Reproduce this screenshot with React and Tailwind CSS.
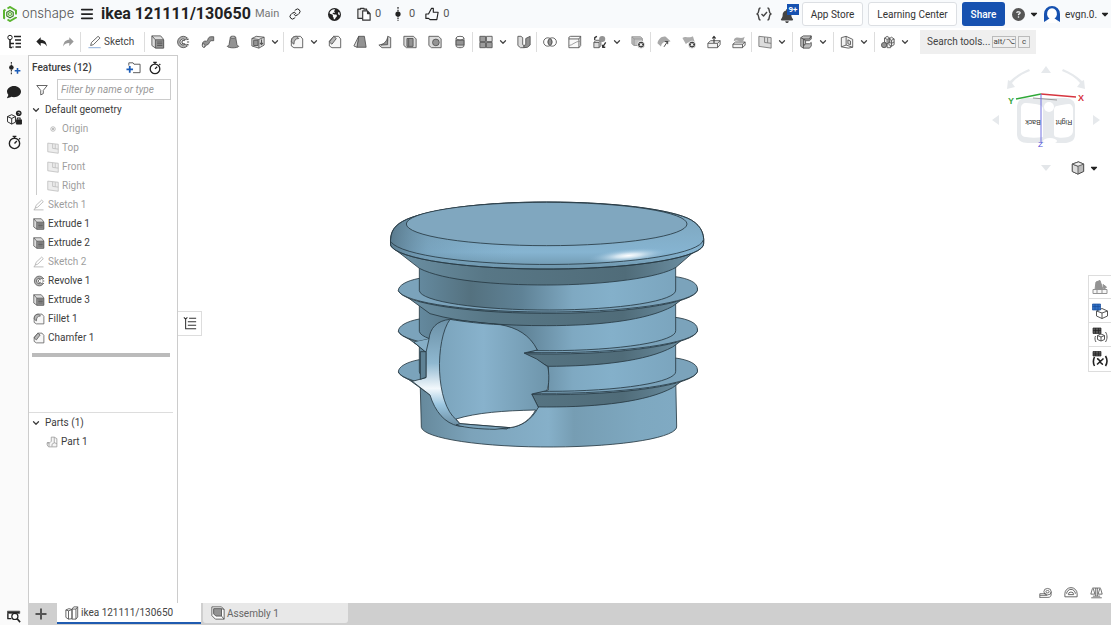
import clsx from 'clsx';
import {
  FaBars,
  FaBell,
  FaCaretDown,
  FaCircleQuestion,
  FaComment,
  FaEarthAmericas,
} from 'react-icons/fa6';
import { LuChevronDown, LuLink } from 'react-icons/lu';

const LINE = '#555';
const MID = '#939393';
const PALE = '#dcdcdc';

// 16 x 16 glyphs, shared by the toolbar, the feature list and the side rails
const GLYPHS = {
  undo: <path d="M6.5 2.5v3c4 .1 6.6 2.3 7 7.5-1.5-2.700-3.5-3.800-7-3.800v3.300L1.500 7.500z" fill="#222" stroke="none" />,
  redo: <path d="M9.5 2.5v3c-4 .1-6.6 2.3-7 7.5 1.5-2.700 3.5-3.800 7-3.800v3.300l5-5z" fill="#999" stroke="none" />,
  sketch: (
    <>
      <path d="M3 12l1-3.5L11.5 1.5l2.2 2L6.2 11z" />
      <path d="M.5 14.500h14" stroke="#7fa3d6" />
    </>
  ),
  pencil: (
    <>
      <path d="M3 12l1-3.5L11.5 1.5l2.2 2L6.2 11zM3 12l-1.500 2.500" />
      <path d="M1 14.500h13" />
    </>
  ),
  extrude: (
    <>
      <path d="M1 1h10l3 3.500v10H4.500L1 12z" fill={PALE} />
      <path d="M5 5.500h9.500v9.500H5z" fill={MID} />
      <path d="M1 1l4 4.500M7 8h6M7 10h6M7 12h6" />
    </>
  ),
  revolve: (
    <>
      <path d="M13 3.500A6.500 6.500 0 1 0 13 12.500L10.500 10.500A3.500 3.500 0 1 1 10.500 5.500z" fill="#b0b0b0" />
      <path d="M12 5.500l2.500-1M12.500 8H15M12 10.500l2.500 1M10 6.500a2 2 0 1 0 0 3.200" strokeWidth="1.300" />
    </>
  ),
  sweep: (
    <>
      <path d="M1.500 11c0-3 2-4.500 4.500-4 2.500.5 1-4.500 5-5h3.500v4.500h-3C9 7 10 11 6.500 11.500 5 11.500 5 14 4 14c-1.500 0-2.500-1.500-2.500-3z" fill={MID} />
      <ellipse cx="3" cy="12" rx="1.500" ry="2" fill={PALE} />
    </>
  ),
  loft: (
    <>
      <path d="M5 2.500h6l1.500 8.500 2 2c-2 2.200-11 2.200-13 0l2-2z" fill={MID} />
      <ellipse cx="8" cy="2.500" rx="3" ry="1.200" fill={PALE} />
    </>
  ),
  thicken: (
    <>
      <path d="M1 4l8 1v10l-8-2.500zM9 5l6-2.500v9L9 15M1 4l5-2.500 9 1" fill={PALE} />
      <path d="M3 6h5v6H3z" fill={MID} />
      <path d="M12 5v6M10.300 9l1.700 2 1.700-2" strokeWidth="1.300" />
    </>
  ),
  fillet: (
    <>
      <path d="M1.500 12.500V7.500c0-4.500 2.500-6 6-6H12L14.500 4.500v10H4.500z" fill="#f7f7f7" />
      <path d="M1.500 8c0-4.500 2.500-6.500 6-6.500l2.500 2.500C6 4 4.500 6.500 4.500 10.500z" fill="#b8b8b8" />
    </>
  ),
  chamfer: (
    <>
      <path d="M1.500 12.500V7l5-5.500H12L14.500 4.500v10H4.500z" fill="#f7f7f7" />
      <path d="M1.500 8l5-6.500L9.500 4 4.500 10.500z" fill="#b8b8b8" />
    </>
  ),
  draft: (
    <>
      <path d="M6.500 1.500h6.500l2 12.500H4.500z" fill={MID} />
      <path d="M6.500 1.500L1 12.500 4.500 14z" fill={PALE} />
    </>
  ),
  rib: (
    <>
      <path d="M11 1.500l3.500 1.500v11.500h-10L1 11.500l6-1.500 4-3z" fill={PALE} />
      <path d="M11 3v8L3.500 11.500C7 10 10 7 11 3z" fill={MID} />
    </>
  ),
  shell: (
    <>
      <path d="M1 1.500h11L15 4.500v10H4L1 12z" fill={PALE} />
      <path d="M4.500 4h7v9h-7zM6.500 4v9" fill={MID} />
    </>
  ),
  hole: (
    <>
      <path d="M1 1.500h11L15 4.500v10H4L1 12z" fill={PALE} />
      <circle cx="9" cy="8.500" r="3.800" fill={MID} />
    </>
  ),
  thread: (
    <>
      <path d="M3.500 3.500v9c0 2.700 9 2.700 9 0v-9" fill={PALE} />
      <path d="M3.500 6h9v5.500h-9z" fill={MID} />
      <ellipse cx="8" cy="3.500" rx="4.500" ry="2" fill="#fff" />
    </>
  ),
  pattern: (
    <>
      <path d="M1 1.500h6.500v6H1zM1 8.500h6.500v6H1zM8.500 8.500H15v6H8.500z" fill="#9c9c9c" />
      <path d="M8.500 1.500H15v6H8.500z" fill={PALE} />
    </>
  ),
  mirror: (
    <>
      <path d="M1 1.500h3.500L6.500 3v8l1.500 1v2.500H4L1 12z" fill={PALE} />
      <path d="M15 1.500L10 4v7l-2 1v2.500l4-.5 3-2.500z" fill={MID} />
    </>
  ),
  boolean: (
    <>
      <circle cx="5.500" cy="8" r="4.800" />
      <circle cx="10.500" cy="8" r="4.800" />
      <path d="M8 4a4.800 4.800 0 0 1 0 8 4.800 4.800 0 0 1 0-8z" fill={MID} />
    </>
  ),
  split: (
    <>
      <path d="M1 2.500L3 1.500h11.500V12l-2 2.500H1zM1 4.500h11.500v10M12.500 4.500l2-3" fill="#fafafa" />
      <path d="M1 12c4 0 7-5 13.500-5" stroke={MID} />
    </>
  ),
  transform: (
    <>
      <path d="M1 8.500h6v6H1zM1 8.500L3.500 6H9l-2 2.500M9 6v6l-2 2.500" fill={PALE} />
      <circle cx="10.500" cy="4.500" r="3.500" fill={MID} stroke="none" />
      <path d="M2 6V3l2.500-1.500M14.500 8.500L11 14M11 11v3h3" strokeWidth="1.500" stroke="#333" />
    </>
  ),
  deletePart: (
    <>
      <path d="M1 2h10l2 2v8H3.500L1 10zM3.500 4.500H13M3.500 4.500V12M1 2l2.500 2.500" fill="#c2c2c2" stroke={MID} />
      <circle cx="11.500" cy="11" r="4" fill="#3c3c3c" stroke="#fff" />
      <path d="M10 9.500l3 3m0-3l-3 3" stroke="#fff" strokeWidth="1.200" />
    </>
  ),
  moveFace: (
    <>
      <path d="M.5 9.500C1.500 4.500 5.500 1 10 2l5.500 5-4 1.500C8 7 5.500 9 4.500 13z" fill="#a8a8a8" stroke="none" />
      <path d="M8 13.500l4-6M9 7.500h3.200v3" stroke="#333" />
    </>
  ),
  deleteFace: (
    <>
      <path d="M.5 3.500c4-3 7 1 12-2L14.500 8c-4 2-7-1-10 2.500z" fill="#adadad" stroke="none" />
      <circle cx="11.500" cy="11" r="4" fill="#3c3c3c" stroke="#fff" />
      <path d="M10 9.500l3 3m0-3l-3 3" stroke="#fff" strokeWidth="1.200" />
    </>
  ),
  replaceFace: (
    <>
      <path d="M1 9.500l3-3h11V11l-3 3.500H1zM1 9.500h11v5M12 9.500l3-3" fill="#f2f2f2" />
      <path d="M8 9V2M6 4l2-2.500L10 4" stroke="#333" strokeWidth="1.200" />
    </>
  ),
  offset: (
    <>
      <path d="M2.500 4.500c4-4 7 1 12-2.500L13 6.500c-4 2-7-2-11 .5z" fill="#a8a8a8" stroke="none" />
      <path d="M1 10.500L4 8h11v3.500l-3 3H1zM1 10.500h11v4M12 10.500L15 8" fill="#f2f2f2" />
    </>
  ),
  plane: (
    <>
      <path d="M1 1.500l14 1.500v12L1 13z" fill={PALE} stroke="#777" />
      <path d="M7.500 2.300V8.500l7.500 1M11 3v6" stroke="#777" />
    </>
  ),
  frame: (
    <>
      <path d="M2 3l3-2h9v3.500L12 6.500H7.500v3.500H12l2-1.500v4L12 15H5l-3-2z" fill="#bdbdbd" />
      <path d="M5 15V4.500L2 3M5 4.500h7L14 1M5 4.500L7.500 6.500M7.500 10L5 12.500" strokeWidth="1.200" />
    </>
  ),
  sheet: (
    <>
      <path d="M1.500 3L7 1.500v10L1.500 13.500zM7 1.500L14.500 5v9L7 11.500M1.500 13.500l8 1.500 5-1" fill="#f2f2f2" />
      <path d="M9 5.500l3 1.500v4L9 10z" fill={PALE} />
    </>
  ),
  fasten: (
    <>
      <path d="M4 3.500l3-2 3 2V8L7 10 4 8zM9 4.500l3-2 3 2V11l-3 2-3-2zM4 3.500l3 1.500 3-1.500M7 5v5M12 6v7M9 4.500L12 6l3-1.500M9 8l3 1.500L15 8M7 10v4.500h4v-2" fill="#eee" />
      <circle cx="3.500" cy="11.500" r="3" fill={MID} />
    </>
  ),
  origin: (
    <>
      <circle cx="8" cy="8" r="3" />
      <circle cx="8" cy="8" r="1" fill={LINE} />
    </>
  ),
  part: <path d="M7 1.500h4l3.500 2v11H3.500l-2-2.500v-3H5l2-2zM11 1.500V9l3.500 1M11 9l-3 2v3M1.500 9H4v5" fill="#f5f5f5" stroke={MID} />,
  tree: (
    <g stroke="#222">
      <circle cx="4" cy="3.500" r="2.200" />
      <path d="M4 6v8M4 9.500h4M8 2.500h7M9 6h6M9.500 9.500H15M9.500 13H15M6.500 13h1M4 13.500h2" strokeWidth="1.600" />
    </g>
  ),
  addVersion: (
    <>
      <path d="M5 1v14" stroke="#333" strokeDasharray="2 1" strokeWidth="1.300" />
      <circle cx="5" cy="7.500" r="2.600" fill="#222" stroke="none" />
      <path d="M12 8v6.500M8.800 11.200h6.500" stroke="#1b5cb8" strokeWidth="1.800" />
    </>
  ),
  lockedPart: (
    <>
      <path d="M.5 7l4.500-2 4 2v6l-4 2-4.500-2.500zM.5 7L5 9l4-2M5 9v6" stroke="#222" />
      <circle cx="12.500" cy="3.500" r="3" fill="#222" stroke="none" />
      <path d="M10 10.500h5.500V15H10z" fill="#222" stroke="#222" />
      <path d="M11 10V8.500h3V10" stroke="#222" strokeWidth="1.200" />
      <path d="M11.500 2.800h2v1l-1 1" stroke="#fff" strokeWidth=".8" />
    </>
  ),
  stopwatch: (
    <g stroke="#222" strokeWidth="1.500">
      <circle cx="8" cy="9" r="5.500" />
      <path d="M8 9l2.500-2.500M6 1.500h4M8 1.500v2M13 3.500l1 1" />
    </g>
  ),
  folder: (
    <>
      <path d="M3 6V3h4.500l1 1.500h6.500v9H7.500" stroke="#555" />
      <path d="M4 6.500v7M.5 10h7" stroke="#1b5cb8" strokeWidth="1.900" />
    </>
  ),
  funnel: <path d="M1 2h14L9.700 8.500v4.300l-3.400 1.700v-6z" strokeWidth="1.200" />,
  clipboard: (
    <g stroke="#333" strokeWidth="1.300">
      <path d="M6.500 13H1V2.500h3V1.500h4v1h3V4" fill="#e8e8e8" />
      <path d="M6.500 4.500h5.500l3 3v7.500H6.500zM12 4.500v3h3" fill="#fff" />
    </g>
  ),
  version: (
    <>
      <path d="M8 0v16" stroke="#333" strokeDasharray="2 1" strokeWidth="1.500" />
      <circle cx="8" cy="8" r="3" fill="#222" stroke="none" />
    </>
  ),
  like: <path d="M1 8h3l3.500-6.500h2L9.500 6H15l-1.500 8.500H6L4 13H1z" stroke="#222" strokeWidth="1.300" />,
  braces: <path d="M4.500 2C1.500 2 4 7 1 8c3 1 .5 6 3.500 6M11.500 2c3 0 .5 5 3.500 6-3 1-.5 6-3.500 6M5.500 8l2 2 3.500-4" stroke="#444" strokeWidth="1.400" />,
  searchFilm: (
    <>
      <path d="M.5 2.500h14V5H.5z" fill="#222" />
      <path d="M1 5v6h4" stroke="#222" strokeWidth="1.600" />
      <circle cx="9" cy="8.500" r="3.500" fill="#fff" stroke="#222" strokeWidth="1.400" />
      <path d="M11.500 11l3.500 4" stroke="#222" strokeWidth="1.800" />
    </>
  ),
  outline: (
    <g stroke="#333" strokeWidth="1.200">
      <path d="M1 1.500l2 2 2-2M3 4v11M7 2.500h8M5.500 6.500H15M5.500 10.500H15M3 14.500h12" />
    </g>
  ),
  studio: (
    <>
      <path d="M1 4.500L4.500 3 8 4v10.500l-4 .5-3-2zM8 3.500L10 1h4.500v11.500l-2 2.500H8z" fill="#fff" />
      <path d="M8 3.500h4.500V15M12.500 3.500l2-2.500M4 5.500V15M1 4.500l3 1L8 4" />
    </>
  ),
  assembly: (
    <>
      <path d="M1 1h11l3 3v11H5l-4-4z" fill="#fff" />
      <path d="M3 3h9v8.500H5.500L3 9z" fill={MID} />
      <path d="M12 11.500l3 3.500M12 3l3 1" />
    </>
  ),
  appearance: (
    <>
      <path d="M4 3l4-1.500 3 9H3zM11 5.500L14.500 8 12 10.500z" fill={MID} stroke={MID} />
      <path d="M1 10.500h14v4H1zM5 10.500v4M10 10.500v4" fill="#f5f5f5" stroke={MID} />
    </>
  ),
  configBlue: (
    <>
      <path d="M4.500 8l5.500-2.500L15.500 8v5L10 15.500 4.500 13zM4.500 8l5.500 2 5.500-2M10 10v5.500" fill="#fff" />
      <path d="M.5 1h8v6h-8zM.5 3.500h8M3 1v6M6 1v6" fill="#2f6fc4" stroke="#1b4e9b" strokeWidth=".7" />
    </>
  ),
  configDark: (
    <>
      <path d="M5.500 8.500L9 7l3.500 1.500v4L9 14l-3.500-1.500zM5.500 8.500L9 10l3.500-1.500M9 10v4M13.500 5c2 3 2 7 0 10M3.500 9c-1 2-.5 4.500.5 6" fill="#fff" />
      <path d="M1 1h8v5.500H1zM1 3.500h8M3.500 1v5.500M6.500 1v5.500" fill="#555" stroke="#222" strokeWidth=".7" />
    </>
  ),
  variables: (
    <>
      <path d="M2.500 6c-1.500 3-1.500 6 0 9M13.500 5c1.800 3 1.800 7 0 10M5 8c3-1 3 6 6 5M11.500 7.500L5 13.500" stroke="#222" strokeWidth="1.600" />
      <path d="M1 .5h8v4.500H1zM1 3h8M3.500 .5v4.500M6.500 .5v4.500" fill="#555" stroke="#222" strokeWidth=".7" />
    </>
  ),
  tape: (
    <>
      <path d="M1 14.500V9.500h8M1 14h10c3 0 4-1.500 4-4.500V7" />
      <ellipse cx="10.500" cy="7" rx="4.500" ry="4" />
      <ellipse cx="10.500" cy="7" rx="2" ry="1.500" />
      <path d="M1 11.500h9" />
    </>
  ),
  protractor: <path d="M1 13.500V10a7 7 0 0 1 14 0v3.500zM5 11a3 3 0 0 1 6 0zM3 10a5 5 0 0 1 10 0" />,
  scale: <path d="M3 2.500h10M7 2.500v10M9 2.500v10M1.500 14.500h13M3.500 12.500h9M3 3L1 10h5L4 3M12 3l-2 7h5l-2-7" />,
  shaded: (
    <>
      <path d="M1.500 3.500L8.500 1l6 2.500v8.500L8 15l-6.500-3z" fill="#bbb" stroke="#333" />
      <path d="M1.500 3.500L8 6v9l-6.500-3z" fill="#ddd" />
      <path d="M1.500 3.500L8.500 1l6 2.500L8 6z" fill="#eee" />
    </>
  ),
};

function Icon({ name, className = 'size-4' }) {
  return (
    <svg
      viewBox="0 0 16 16"
      className={clsx('shrink-0', className)}
      fill="none"
      stroke={LINE}
      strokeWidth="1"
      strokeLinejoin="round"
      aria-hidden="true"
    >
      {GLYPHS[name]}
    </svg>
  );
}

function IconButton({ name, label, size = 'size-4', className }) {
  return (
    <button type="button" aria-label={label || name} className={clsx('flex shrink-0 items-center justify-center', className)}>
      <Icon name={name} className={size} />
    </button>
  );
}

const TOOL_GROUPS = [
  ['extrude', 'revolve', 'sweep', 'loft', 'thicken', '>'],
  ['fillet', '>', 'chamfer', 'draft', 'rib', 'shell', 'hole', 'thread'],
  ['pattern', '>', 'mirror'],
  ['boolean', 'split', 'transform', '>', 'deletePart'],
  ['moveFace', 'deleteFace', 'replaceFace', 'offset'],
  ['plane', '>'],
  ['frame', '>'],
  ['sheet', '>'],
  ['fasten', '>'],
];

const FEATURES = [
  { label: 'Sketch 1', icon: 'pencil', muted: true },
  { label: 'Extrude 1', icon: 'extrude' },
  { label: 'Extrude 2', icon: 'extrude' },
  { label: 'Sketch 2', icon: 'pencil', muted: true },
  { label: 'Revolve 1', icon: 'revolve' },
  { label: 'Extrude 3', icon: 'extrude' },
  { label: 'Fillet 1', icon: 'fillet' },
  { label: 'Chamfer 1', icon: 'chamfer' },
];

const DEFAULT_GEOMETRY = [
  { label: 'Origin', icon: 'origin' },
  { label: 'Top', icon: 'plane' },
  { label: 'Front', icon: 'plane' },
  { label: 'Right', icon: 'plane' },
];

function Logo() {
  return (
    <a href="#home" className="flex w-[74px] items-center gap-1">
      <svg viewBox="0 0 16 16" className="size-4 shrink-0" fill="none" stroke="#5cb531" strokeWidth="2" aria-hidden="true">
        <path d="M5.500 2.500L8 1l6 3.500v4M14 11v.5L8 15l-2.500-1.500M3 12.500L2 12V4.500l1.500-.8" />
        <path d="M8 4.500l3.200 1.800v3.600L8 11.700 4.800 9.900V6.300z" strokeWidth="1.200" stroke="#3f7f2a" />
        <circle cx="8" cy="8" r="1.500" strokeWidth="1.200" />
      </svg>
      <span className="font-[Inter] text-[13px] font-light text-[#555]">onshape</span>
    </a>
  );
}

function Header() {
  return (
    <header className="flex h-7 shrink-0 items-center bg-[#f8fafc] pl-[2px] pr-px">
      <Logo />
      <button type="button" aria-label="Menu" className="ml-1 text-[#222]">
        <FaBars className="size-[14px]" />
      </button>
      <h1 className="ml-[7px] whitespace-nowrap text-[16px] font-bold text-[#222]">ikea 121111/130650</h1>
      <span className="ml-1 w-[26px] text-[11px] leading-4 text-[#777]">Main</span>
      <button type="button" aria-label="Copy link" className="ml-2 text-[#222]">
        <LuLink className="size-3" />
      </button>
      <button type="button" aria-label="Public" className="ml-[27px] text-[#222]">
        <FaEarthAmericas className="size-[13px]" />
      </button>
      <div className="ml-4 flex items-center gap-[10px] text-[11px] text-[#555]">
        <button type="button" aria-label="Copies" className="flex items-center gap-1">
          <Icon name="clipboard" className="size-[14px]" />0
        </button>
        <button type="button" aria-label="Versions" className="flex items-center gap-1">
          <Icon name="version" className="size-[14px]" />0
        </button>
        <button type="button" aria-label="Likes" className="flex items-center gap-1">
          <Icon name="like" className="size-[14px]" />0
        </button>
      </div>

      <div className="ml-auto flex items-center text-[10px] text-[#333]">
        <IconButton name="braces" label="Custom features" />
        <button type="button" aria-label="Notifications" className="relative ml-[8px] mr-[8px] text-[#444]">
          <FaBell className="mt-1 size-[14px]" />
          <span className="absolute -top-px left-[7px] h-[11px] w-3 bg-[#1651b0] text-center text-[8px] font-bold leading-[11px] text-white">
            9+
          </span>
        </button>
        <button type="button" className="h-6 w-[61px] rounded-[3px] border border-[#dcdfe3] bg-white">App Store</button>
        <button type="button" className="ml-[5px] h-6 w-[89px] rounded-[3px] border border-[#dcdfe3] bg-white">Learning Center</button>
        <button type="button" className="ml-[5px] h-6 w-[43px] rounded-[3px] bg-[#1651b0] font-medium text-white">Share</button>
        <button type="button" aria-label="Help" className="ml-[7px] flex items-center gap-1 text-[#555]">
          <FaCircleQuestion className="size-[13px]" />
          <FaCaretDown className="size-[10px] text-[#222]" />
        </button>
        <button type="button" className="ml-1 flex items-center gap-1">
          <svg viewBox="0 0 18 18" className="size-[18px]" aria-hidden="true">
            <path d="M1 17V9a8 8 0 0 1 16 0v8l-4-2.500h-8z" fill="#1651b0" />
            <path d="M4 18c0-3 1.500-4 2.500-4.500A5 5.500 0 1 1 11.500 13.500c1 .5 2.500 1.500 2.500 4.500z" fill="#fff" />
          </svg>
          <span className="w-[31px] text-left">evgn.0.</span>
          <FaCaretDown className="size-[10px] text-[#222]" />
        </button>
      </div>
    </header>
  );
}

function Toolbar() {
  return (
    <div className="flex h-[27px] shrink-0 items-center bg-white">
      <IconButton name="tree" label="Feature list" className="w-7" />
      <IconButton name="undo" className="w-[27px]" size="size-[14px]" />
      <IconButton name="redo" className="w-[25px]" size="size-[14px]" />
      <button type="button" className="flex h-5 w-[64px] items-center gap-[2px] border-l border-[#ddd] pl-[7px] text-[10px] text-[#444]">
        <Icon name="sketch" className="size-[14px]" />
        Sketch
      </button>
      {TOOL_GROUPS.map((group) => (
        <div key={group[0]} className="flex h-5 items-center border-l border-[#ddd]">
          {group.map((tool) =>
            tool === '>' ? (
              <button
                key={tool}
                type="button"
                aria-label="More tools"
                className={clsx('flex text-[#444]', group.length === 2 ? 'w-[15px]' : 'w-[13px]')}
              >
                <LuChevronDown className="size-[10px] shrink-0" strokeWidth={3} />
              </button>
            ) : (
              <IconButton key={tool} name={tool} size="size-[14px]" className="w-[25px]" />
            )
          )}
        </div>
      ))}
      <button type="button" className="ml-[5px] flex h-6 w-[116px] shrink-0 items-center gap-[2px] bg-[#efefef] pl-[7px] text-[10px] text-[#444]">
        <span className="w-[63px] whitespace-nowrap text-left">Search tools...</span>
        <kbd className="h-3 w-6 border border-[#bbb] text-center font-[Roboto] text-[8px] leading-[10px]">alt/⌥</kbd>
        <kbd className="h-3 w-3 border border-[#bbb] text-center font-[Roboto] text-[8px] leading-[10px]">c</kbd>
      </button>
    </div>
  );
}

function LeftRail() {
  return (
    <nav className="flex w-7 shrink-0 flex-col items-center bg-[#fafafa] pt-1">
      <IconButton name="addVersion" label="Create version" size="size-[14px]" className="h-[18px]" />
      <button type="button" aria-label="Comments" className="mt-2 text-[#222]">
        <FaComment className="size-[14px]" />
      </button>
      <IconButton name="lockedPart" label="Properties" size="size-[15px]" className="mt-[9px] h-[18px]" />
      <IconButton name="stopwatch" label="Performance" size="size-[15px]" className="mt-[7px] h-[18px]" />
      <IconButton name="searchFilm" label="Search documents" size="size-[14px]" className="mb-[2px] mt-auto" />
    </nav>
  );
}

function TreeRow({ icon, label, muted, size = 'size-3' }) {
  return (
    <li className={clsx('flex h-[19px] items-center', muted && 'opacity-50')}>
      <button type="button" className="flex items-center gap-[3px]">
        <Icon name={icon} className={size} />
        {label}
      </button>
    </li>
  );
}

function GroupTitle({ children }) {
  return (
    <button type="button" className="flex h-[19px] items-center gap-1 pl-[2px]">
      <LuChevronDown className="size-[10px]" strokeWidth={3} />
      {children}
    </button>
  );
}

function FeaturePanel() {
  return (
    <aside className="flex w-[150px] shrink-0 flex-col border border-b-0 border-[#ccc] bg-white text-[10px] text-[#3c3c3c]">
      <section className="flex-[15]">
        <div className="flex h-[23px] items-center pl-[3px]">
          <h2 className="w-[94px] font-medium">Features (12)</h2>
          <IconButton name="folder" label="Add folder" size="size-[15px]" />
          <IconButton name="stopwatch" label="Rebuild time" size="size-[14px]" className="ml-[7px]" />
        </div>
        <div className="flex items-center pl-[7px]">
          <Icon name="funnel" className="size-3" />
          <input
            type="text"
            aria-label="Filter by name or type"
            placeholder="Filter by name or type"
            className="ml-[9px] h-[21px] w-[114px] border border-[#ccc] px-[3px] italic outline-none placeholder:text-[#999]"
          />
        </div>
        <GroupTitle>Default geometry</GroupTitle>
        <ul className="ml-[7px] border-l border-[#ccc] pl-[10px]">
          {DEFAULT_GEOMETRY.map((row) => (
            <TreeRow key={row.label} {...row} muted />
          ))}
        </ul>
        <ul className="pl-1">
          {FEATURES.map((row) => (
            <TreeRow key={row.label} {...row} />
          ))}
        </ul>
        <div className="ml-[3px] mr-[7px] mt-[6px] h-1 bg-[#bbb]" />
      </section>
      <section className="mr-1 flex-[8] border-t border-[#ddd]">
        <GroupTitle>Parts (1)</GroupTitle>
        <ul className="pl-[17px]">
          <TreeRow icon="part" label="Part 1" />
        </ul>
      </section>
    </aside>
  );
}

// one flange of the plug: cone below, flat face above, then the body over it
function Flange({ y }) {
  return (
    <g transform={`translate(0 ${y})`}>
      <path
        d="M55 302L150 371C250 400 380 407 500 407C660 407 800 391 878 349L952 294A449 72 0 0 1 55 302z"
        fill="url(#cone)"
      />
      <path d="M118 265C80 272 55 286 55 302A449 68 0 0 0 952 294C952 278 925 265 886 260z" fill="#7ba3bb" />
      <path d="M118 200V302A384 59 0 0 0 887 300V200z" fill="url(#neck)" />
    </g>
  );
}

const CAP_SIDE =
  'M32 166C28 122 45 104 80 88C160 54 330 36 500 36C680 36 850 54 922 84C958 100 974 126 971 160A470 76 0 0 1 32 166z';

function PlugModel() {
  return (
    <svg viewBox="0 0 1005 810" className="w-[335px]" stroke="#263842" strokeWidth="2.500" strokeLinejoin="round" role="img" aria-label="Part 1">
      <defs>
        <linearGradient id="body">
          <stop offset="0" stopColor="#66899c" />
          <stop offset=".2" stopColor="#7ca3ba" />
          <stop offset=".5" stopColor="#86b0c9" />
          <stop offset=".6" stopColor="#769db3" />
          <stop offset=".85" stopColor="#7ea8c0" />
          <stop offset="1" stopColor="#80aac3" />
        </linearGradient>
        <linearGradient id="neck">
          <stop offset="0" stopColor="#64899e" />
          <stop offset=".2" stopColor="#54717f" />
          <stop offset=".4" stopColor="#5f8296" />
          <stop offset=".6" stopColor="#7fa9c2" />
          <stop offset=".75" stopColor="#84b0ca" />
          <stop offset="1" stopColor="#7ba5be" />
        </linearGradient>
        <linearGradient id="cone">
          <stop offset="0" stopColor="#6d92a6" />
          <stop offset=".3" stopColor="#587786" />
          <stop offset=".75" stopColor="#506c79" />
          <stop offset="1" stopColor="#7196ab" />
        </linearGradient>
        <linearGradient id="rim" x1="0" x2="0" y1="0" y2="1">
          <stop offset=".3" stopColor="#7fa9c2" />
          <stop offset=".75" stopColor="#86b4d1" />
          <stop offset="1" stopColor="#6d94aa" />
        </linearGradient>
        <linearGradient id="rimSide">
          <stop offset="0" stopColor="#3f5967" stopOpacity=".6" />
          <stop offset=".12" stopColor="#5d8196" stopOpacity=".3" />
          <stop offset=".4" stopColor="#6f99b1" stopOpacity="0" />
        </linearGradient>
        <linearGradient id="wall" x1="0" x2="0" y1="0" y2="1">
          <stop offset="0" stopColor="#6b90a6" />
          <stop offset=".4" stopColor="#8fb8d0" />
          <stop offset=".63" stopColor="#f2f8fc" />
          <stop offset=".78" stopColor="#9bc6e0" />
          <stop offset="1" stopColor="#628397" />
        </linearGradient>
        <linearGradient id="bore">
          <stop offset="0" stopColor="#7ba4bc" />
          <stop offset=".4" stopColor="#88b2cc" />
          <stop offset="1" stopColor="#6e95ab" />
        </linearGradient>
        <radialGradient id="shine">
          <stop offset="0" stopColor="#fff" />
          <stop offset=".3" stopColor="#e8f3fa" stopOpacity=".8" />
          <stop offset="1" stopColor="#8bbada" stopOpacity="0" />
        </radialGradient>
      </defs>

      <path d="M120 560L124 712A383 61 0 0 0 890 708L887 560z" fill="url(#body)" />
      <Flange y={244} />
      <Flange y={122} />
      <Flange y={0} />

      {/* side hole */}
      <path
        d="M210 388C170 392 150 415 147 447L102 457L138 487V563L97 574L150 615C165 665 195 700 235 708L380 717L475 652L455 612L505 600V530L432 489L472 480L360 404z"
        fill="url(#wall)"
      />
      <path d="M102 457L138 487L147 447" fill="#86aec6" />
      <path d="M121 485H138V562L121 568z" fill="#5f8295" />
      <path
        d="M210 388C165 450 165 640 230 690L240 701L390 713C425 708 455 690 475 652L455 612L500 602C508 590 508 545 503 530L470 507L432 489L472 480C450 435 410 412 360 404C310 402 250 395 210 388z"
        fill="url(#bore)"
      />
      <path d="M228 687C290 668 370 662 467 660C450 690 425 708 390 713L240 701z" fill="#fff" />
      <path d="M240 701L390 713L345 718C300 717 260 714 228 705z" fill="#7ba3bb" />

      {/* cap */}
      <path d="M32 168L118 235C190 272 350 285 500 285C680 285 840 262 888 232L971 160z" fill="url(#cone)" />
      <path d={CAP_SIDE} fill="url(#rim)" />
      <path d={CAP_SIDE} fill="url(#rimSide)" />
      <ellipse cx="745" cy="197" rx="120" ry="21" fill="url(#shine)" stroke="none" transform="rotate(-5 745 197)" />
      <path d="M34 157A470 76 0 0 0 970 150" fill="none" />
      <ellipse cx="500" cy="102" rx="421" ry="65" fill="#80a7bf" />
    </svg>
  );
}

function ViewCube() {
  return (
    <svg viewBox="0 0 131 100" className="w-[131px]" fontFamily="Liberation Sans, sans-serif" role="img" aria-label="View cube">
      <g fill="#e6e9ec">
        <path d="M66 6l5 7H61zM12 60l7-5v10zM120 60l-7-5v10z" />
        <path d="M50 11C42 14 36 18 32 23l3 4-8 2 1-9 2 1C35 16 42 12 49 9zM82 11c8 3 14 7 18 12l-3 4 8 2-1-9-2 1C97 16 90 12 83 9z" />
        <path d="M37 46c1-6 4-8 10-8h38c6 0 10 3 10 8v28c0 6-3 8-9 9H48c-7 0-11-3-11-9z" />
      </g>
      <path d="M41 48c0-3 2-5 5-5 5 0 10 1 14 2 2 1 3 2 3 4v28c-6 1-12 1-17 0-3 0-5-2-5-4zM74 50c0-2 1-4 3-4 4-1 8-2 12-2 2 0 4 2 4 5v22c0 3-2 5-5 6-4 1-9 1-12 0-1 0-2-1-2-3z" fill="#fff" />
      <circle cx="69" cy="47" r="5" fill="#fff" />
      <ellipse cx="70" cy="81" rx="7" ry="3" fill="#fff" />
      <path d="M53 38l24 2" stroke="#999" strokeWidth="1" />
      <path d="M61 34L36 39" stroke="#2fa838" strokeWidth="1.500" />
      <path d="M61 34l35 3" stroke="#d6353f" strokeWidth="1.500" />
      <path d="M61 34v48" stroke="#7070e0" strokeWidth="1" />
      <text x="28" y="44" fontSize="9" fontWeight="bold" fill="#3aa843">Y</text>
      <text x="98" y="41" fontSize="9" fontWeight="bold" fill="#d6353f">X</text>
      <text x="58" y="87" fontSize="8" fill="#5050d8">Z</text>
      <g fontSize="7" fill="#333" textAnchor="middle">
        <text transform="translate(53 60) rotate(180)">Back</text>
        <text transform="translate(84 60) rotate(180)">Right</text>
      </g>
    </svg>
  );
}

function Viewport() {
  return (
    <main className="flex min-w-0 flex-1 bg-white">
      <div className="flex w-6 shrink-0 flex-col justify-center pb-3">
        <IconButton
          name="outline"
          label="Toggle feature list"
          size="size-[14px]"
          className="h-[25px] w-6 border border-l-0 border-[#ddd] bg-white"
        />
      </div>
      <div className="flex min-w-0 flex-1 items-center justify-center pb-2">
        <PlugModel />
      </div>
      <div className="flex w-[219px] shrink-0 flex-col items-end pt-[5px]">
        <ViewCube />
        <div className="flex w-[131px] items-center pl-[61px] pt-px">
          <span className="h-0 w-0 border-x-[5px] border-t-[6px] border-x-transparent border-t-[#e3e6e9]" />
          <button type="button" aria-label="View style" className="ml-5 flex items-center gap-1 text-[#222]">
            <Icon name="shaded" className="size-[14px]" />
            <FaCaretDown className="size-[10px]" />
          </button>
        </div>
        <div className="mt-[100px] flex flex-col divide-y divide-[#ddd] border border-r-0 border-[#ddd]">
          <IconButton name="appearance" label="Appearances" className="h-[23px] w-[22px]" />
          <IconButton name="configBlue" label="Configurations" className="h-6 w-[22px]" />
          <IconButton name="configDark" label="Configuration table" className="h-6 w-[22px]" />
          <IconButton name="variables" label="Variable table" className="h-6 w-[22px]" />
        </div>
        <div className="mb-1 mr-2 mt-auto flex gap-3">
          <IconButton name="tape" label="Measure" size="size-[13px]" />
          <IconButton name="protractor" label="Angle" size="size-[14px]" />
          <IconButton name="scale" label="Mass properties" size="size-[13px]" />
        </div>
      </div>
    </main>
  );
}

function TabBar() {
  return (
    <div className="flex h-[22px] shrink-0 items-start bg-[#cfcfcf] text-[10px] text-[#444]">
      <button type="button" aria-label="Add tab" className="flex h-full w-[29px] items-center justify-center pr-1">
        <svg viewBox="0 0 12 12" className="size-3" stroke="#555" strokeWidth="2" aria-hidden="true">
          <path d="M6 0.500v11M0.500 6h11" />
        </svg>
      </button>
      <button type="button" className="flex h-[21px] w-36 items-center gap-[2px] border-b-2 border-[#1f5bb0] bg-white pl-2">
        <Icon name="studio" className="size-[14px]" />
        ikea 121111/130650
      </button>
      <button type="button" className="ml-[2px] flex h-5 w-[145px] items-center gap-[2px] rounded-b-[3px] bg-[#e8e8e8] pl-2 text-[#666]">
        <Icon name="assembly" className="size-[14px]" />
        Assembly 1
      </button>
    </div>
  );
}

export default function App() {
  return (
    <div className="flex h-screen flex-col overflow-hidden bg-white font-[Roboto,sans-serif]">
      <Header />
      <Toolbar />
      <div className="flex min-h-0 flex-1">
        <LeftRail />
        <div className="flex min-w-0 flex-1 flex-col">
          <div className="flex min-h-0 flex-1">
            <FeaturePanel />
            <Viewport />
          </div>
          <TabBar />
        </div>
      </div>
    </div>
  );
}
